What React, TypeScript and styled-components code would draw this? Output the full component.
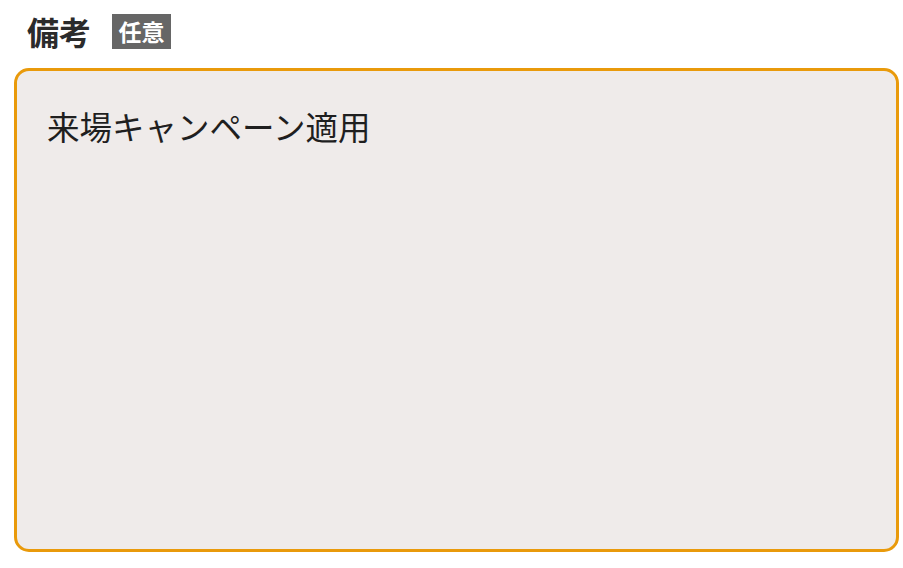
import { FunctionComponent } from 'react';
import styled, { createGlobalStyle } from 'styled-components';

const GlobalStyle = createGlobalStyle`
  html, body {
    margin: 0;
    background: #ffffff;
  }
  body {
    font-family: "Noto Sans CJK JP", "Noto Sans", sans-serif;
  }
`;

const App: FunctionComponent = () => {
  return (
    <>
      <GlobalStyle />
      <Field>
        <LabelRow>
          <Label>備考</Label>
          <Badge>任意</Badge>
        </LabelRow>
        <NoteBox>来場キャンペーン適用</NoteBox>
      </Field>
    </>
  );
};

export default App;

const Field = styled.div`
  display: flex;
  flex-direction: column;
  gap: 19px;
  padding: 13px 4px 0 14px;
`;

const LabelRow = styled.div`
  display: flex;
  align-items: center;
  gap: 21px;
  padding-left: 13px;
  height: 36px;
`;

const Label = styled.span`
  font-size: 32px;
  font-weight: 700;
  color: #2b2b2b;
  line-height: 1;
`;

const Badge = styled.span`
  display: inline-flex;
  align-items: center;
  justify-content: center;
  width: 59px;
  height: 35px;
  background: #666666;
  color: #ffffff;
  font-size: 23px;
  font-weight: 700;
  line-height: 1;
`;

const NoteBox = styled.div`
  box-sizing: border-box;
  height: 484px;
  border: 3px solid #e99a0b;
  border-radius: 15px;
  background: #efebea;
  padding: 35px 30px;
  font-size: 32.5px;
  line-height: 1.2;
  color: #1f1f1f;
`;
